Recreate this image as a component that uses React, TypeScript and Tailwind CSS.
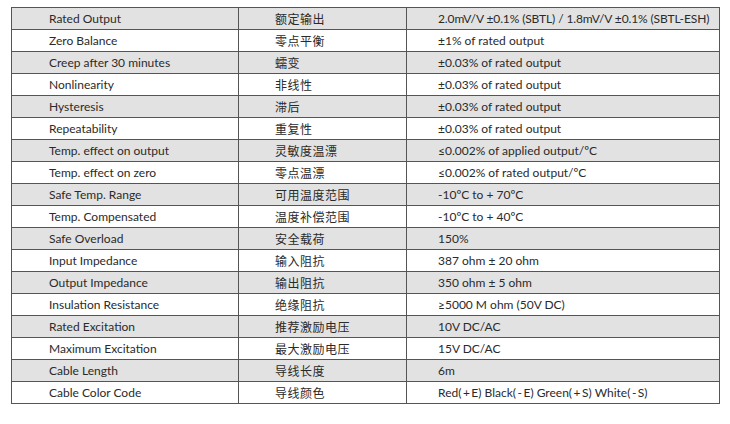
const rows: [string, string, string][] = [
  ['Rated Output', '额定输出', '2.0mV/V ±0.1% (SBTL) / 1.8mV/V ±0.1% (SBTL-ESH)'],
  ['Zero Balance', '零点平衡', '±1% of rated output'],
  ['Creep after 30 minutes', '蠕变', '±0.03% of rated output'],
  ['Nonlinearity', '非线性', '±0.03% of rated output'],
  ['Hysteresis', '滞后', '±0.03% of rated output'],
  ['Repeatability', '重复性', '±0.03% of rated output'],
  ['Temp. effect on output', '灵敏度温漂', '≤0.002% of applied output/ºC'],
  ['Temp. effect on zero', '零点温漂', '≤0.002% of rated output/ºC'],
  ['Safe Temp. Range', '可用温度范围', '-10ºC to + 70ºC'],
  ['Temp. Compensated', '温度补偿范围', '-10ºC to + 40ºC'],
  ['Safe Overload', '安全载荷', '150%'],
  ['Input Impedance', '输入阻抗', '387 ohm ± 20 ohm'],
  ['Output Impedance', '输出阻抗', '350 ohm ± 5 ohm'],
  ['Insulation Resistance', '绝缘阻抗', '≥5000 M ohm (50V DC)'],
  ['Rated Excitation', '推荐激励电压', '10V DC/AC'],
  ['Maximum Excitation', '最大激励电压', '15V DC/AC'],
  ['Cable Length', '导线长度', '6m'],
  ['Cable Color Code', '导线颜色', 'Red(\u2009+\u2009E) Black(\u2009-\u2009E) Green(\u2009+\u2009S) White(\u2009-\u2009S)'],
];

export default function App() {
  return (
    <div className="w-[730px] h-[424px] bg-white pt-[7px] pl-[11px] text-[#2a2a2a] font-['Lato','Noto_Sans_CJK_SC',sans-serif]">
      <table className="border-collapse border border-[#333] table-fixed w-[708px]">
        <colgroup>
          <col className="w-[227px]" />
          <col className="w-[168px]" />
          <col className="w-[313px]" />
        </colgroup>
        <tbody>
          {rows.map(([en, zh, val], i) => (
            <tr key={en} className={i % 2 === 0 ? 'bg-[#e2e2e2]' : 'bg-white'}>
              <td className="h-[22px] p-0 pl-[37px] border border-[#555] text-[12px] leading-[21px] whitespace-nowrap">{en}</td>
              <td className="h-[22px] p-0 pl-[36px] border border-[#555] text-[12px] leading-[21px] tracking-[0.5px] whitespace-nowrap font-['Noto_Sans_CJK_SC',sans-serif]">{zh}</td>
              <td className={`h-[22px] p-0 pl-[31px] border border-[#555] text-[12px] leading-[21px] whitespace-nowrap ${i === 0 ? 'tracking-[-0.12px]' : ''}`}>{val}</td>
            </tr>
          ))}
        </tbody>
      </table>
    </div>
  );
}
